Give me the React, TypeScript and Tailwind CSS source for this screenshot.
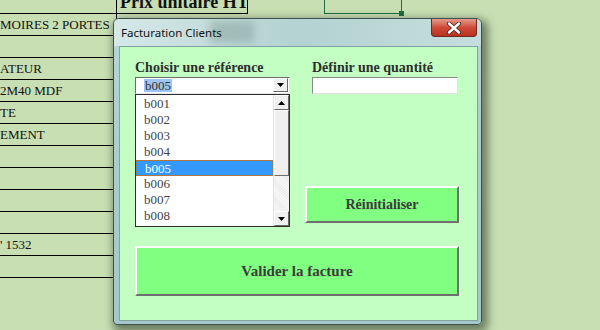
import React from "react";

const serif = { fontFamily: '"Liberation Serif", "DejaVu Serif", serif' };

function Tri({ up = false }: { up?: boolean }) {
  return (
    <svg width="7" height="4" viewBox="0 0 7 4" className="block">
      {up ? <polygon points="0,4 7,4 3.5,0" fill="#000" /> : <polygon points="0,0 7,0 3.5,4" fill="#000" />}
    </svg>
  );
}

function ScrollBtn({ up = false, h = 15 }: { up?: boolean; h?: number }) {
  return (
    <div
      className="flex items-center justify-center bg-[#f0f0f0] border-t border-l border-t-[#ffffff] border-l-[#ffffff] border-b border-r border-b-[#696969] border-r-[#696969]"
      style={{ height: h }}
    >
      <Tri up={up} />
    </div>
  );
}

export default function App() {
  const rows = [
    "MOIRES 2 PORTES",
    "",
    "ATEUR",
    "2M40 MDF",
    "TE",
    "EMENT",
    "",
    "",
    "",
    "",
    "' 1532",
    "",
  ];
  const items = ["b001", "b002", "b003", "b004", "b005", "b006", "b007", "b008"];

  return (
    <div className="relative w-[600px] h-[330px] overflow-hidden bg-[#c8dfb4]" style={serif}>
      {/* spreadsheet background */}
      <div className="flex flex-col">
        <div className="flex h-[14px]">
          <div className="w-[116px] border-b border-black" />
          <div className="w-[132px] h-[14px] border-l border-r border-b border-black overflow-hidden">
            <div className="text-[18px] font-bold leading-[18px] mt-[-7px] pl-[3px] text-[#111] whitespace-nowrap">
              Prix unitaire HT
            </div>
          </div>
          <div className="w-[76px]" />
          <div className="relative w-[78px] h-[14px] border border-[#1e6e40] border-t-0">
            <div className="absolute right-[-3px] bottom-[-3px] w-[5px] h-[5px] bg-[#1e6e40]" />
          </div>
        </div>
        {rows.map((r, i) => (
          <div
            key={i}
            className="w-[117px] h-[22px] border-b border-r border-black text-[13px] leading-[22px] text-[#111] whitespace-nowrap overflow-hidden"
          >
            {r}
          </div>
        ))}
      </div>

      {/* dialog window */}
      <div className="absolute left-[113px] top-[18px] w-[369px] h-[307px] rounded-t-[6px] rounded-b-[4px] border border-[#3e4f4f] bg-gradient-to-b from-[#b9d6d6] via-[#a9cccc] to-[#a4c8c8] shadow-[3px_4px_9px_3px_rgba(35,45,30,0.55)] flex flex-col">
        {/* title bar */}
        <div className="relative h-[27px] rounded-t-[5px] bg-gradient-to-r from-[#d6e8e8] via-[#b3d2d1] to-[#c4dedd] overflow-hidden">
          <div className="absolute left-[96px] top-[2px] w-[44px] h-[22px] bg-[#6f8f86] opacity-40 blur-[4px]" />
          <div
            className="absolute left-[7px] top-[7px] text-[11.5px] leading-[14px] text-[#111]"
            style={{ fontFamily: '"Noto Sans", "Liberation Sans", sans-serif' }}
          >
            Facturation Clients
          </div>
          <div className="absolute right-[4px] top-0 w-[46px] h-[18px] rounded-b-[4px] border border-[#6a2a22] border-t-0 bg-gradient-to-b from-[#e49a8c] via-[#cf4a36] to-[#b8321f] flex items-center justify-center">
            <svg width="16" height="12" viewBox="0 0 16 12">
              <path d="M3 1.5 L13 10.5 M13 1.5 L3 10.5" stroke="#4a2a28" strokeWidth="4.2" strokeLinecap="round" />
              <path d="M3 1.5 L13 10.5 M13 1.5 L3 10.5" stroke="#ffffff" strokeWidth="2.4" strokeLinecap="round" />
            </svg>
          </div>
        </div>

        {/* client area */}
        <div className="ml-[5px] w-[359px] h-[275px] border border-[#7fa3a3] bg-[#c3fec3] pl-[15px] pt-[13px]">
          <div className="flex">
            {/* left column */}
            <div className="w-[155px] flex flex-col">
              <div className="h-[16px] text-[14px] font-bold leading-[16px] text-[#2e2e2e] whitespace-nowrap">
                Choisir une référence
              </div>
              <div className="mt-[1px] h-[17px] flex bg-white border-t border-l border-[#6d6d6d] border-b border-r border-b-[#e6e6e6] border-r-[#e6e6e6]">
                <div className="flex-1 pl-[8px] flex items-center">
                  <span className="bg-[#9fc6f0] text-[#333] text-[13px] leading-[13px] px-[1px] block h-[13px]">b005</span>
                </div>
                <div className="w-[15px] mr-[1px] mt-[0px] h-[14px]">
                  <ScrollBtn h={14} />
                </div>
              </div>
              <div className="h-[133px] flex bg-white border border-[#2e2e2e]">
                <div className="flex-1 pt-[1px]">
                  {items.map((it) => (
                    <div
                      key={it}
                      className={
                        "h-[16px] pl-[8px] text-[13px] leading-[16px] " +
                        (it === "b005"
                          ? "bg-[#3399ff] text-white border border-dotted border-[#b0703a] pl-[7px] leading-[14px]"
                          : "text-[#444]")
                      }
                    >
                      {it}
                    </div>
                  ))}
                </div>
                <div className="w-[16px] flex flex-col border-l border-[#e0e0e0]">
                  <ScrollBtn up h={15} />
                  <div className="h-[66px] bg-[#efefef] border-t border-l border-t-white border-l-white border-b border-r border-b-[#6d6d6d] border-r-[#6d6d6d]" />
                  <div className="flex-1 bg-[repeating-linear-gradient(45deg,#f7f7f7_0px,#f7f7f7_1px,#ececec_1px,#ececec_2px)]" />
                  <ScrollBtn h={15} />
                </div>
              </div>
            </div>

            {/* right column */}
            <div className="ml-[15px] w-[154px] flex flex-col">
              <div className="h-[16px] pl-[7px] text-[14px] font-bold leading-[16px] text-[#2e2e2e] whitespace-nowrap">
                Définir une quantité
              </div>
              <div className="ml-[7px] mt-[1px] w-[146px] h-[17px] bg-white border-t border-l border-[#8a8a8a] border-b border-r border-b-[#e2e2e2] border-r-[#e2e2e2]" />
              <button className="mt-[92px] h-[37px] w-[154px] bg-[#80ff80] border-t-2 border-l-2 border-t-white border-l-white border-b-2 border-r-2 border-b-[#6f6f6f] border-r-[#6f6f6f] text-[14px] font-bold text-[#3c3c3c]">
                Réinitialiser
              </button>
            </div>
          </div>

          <button className="mt-[19px] w-[324px] h-[50px] bg-[#80ff80] border-t-2 border-l-2 border-t-white border-l-white border-b-2 border-r-2 border-b-[#6f6f6f] border-r-[#6f6f6f] text-[15px] font-bold text-[#3c3c3c]">
            Valider la facture
          </button>
        </div>
      </div>
    </div>
  );
}
